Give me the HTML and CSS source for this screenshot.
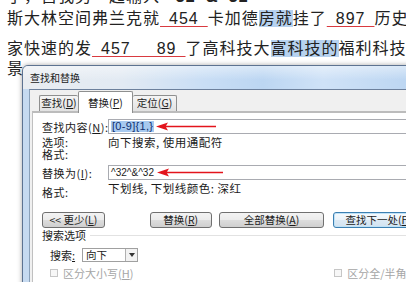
FILE: index.html
```html
<!DOCTYPE html>
<html lang="zh-CN">
<head>
    <meta charset="UTF-8">
    <title>查找和替换</title>
    <link rel="stylesheet" href="styles.css">
</head>
<body>
    <div class="screen">
        <div class="doc">
            <p class="line line-cut">了，自我另一起输入 <b>^32^&amp;^32</b></p>
            <p class="line">斯大林空间弗兰克就<span class="num">&ensp;454&ensp;</span>卡加德<span class="hl">房就</span>挂了<span class="num">&ensp;897&ensp;</span>历史:</p>
            <p class="line">家快速的发<span class="num">&ensp;457&emsp;&ensp;89&ensp;</span>了高科技大<span class="hl">富科技的</span>福利科技发展</p>
            <p class="line line-last">景</p>
        </div>

        <div class="dialog">
            <div class="titlebar">查找和替换</div>
            <div class="client">
                <div class="tabs">
                    <div class="tab tab-find">查找(<u>D</u>)</div>
                    <div class="tab tab-replace active">替换(<u>P</u>)</div>
                    <div class="tab tab-goto">定位(<u>G</u>)</div>
                </div>
                <div class="panel">
                    <div class="row field">
                        <span class="label">查找内容(<u>N</u>):</span>
                        <div class="input">
                            <span class="sel">[0-9]{1,}</span>
                            <svg class="arrow" width="60" height="9" viewBox="0 0 60 9"><path d="M0 4.5 L12 0.5 L10 3.7 L60 3.8 L60 5.2 L10 5.3 L12 8.5 Z" fill="#e3141c"/></svg>
                        </div>
                    </div>
                    <div class="row text-row">
                        <span class="label">选项:</span>
                        <span class="value">向下搜索, 使用通配符</span>
                    </div>
                    <div class="row text-row">
                        <span class="label">格式:</span>
                    </div>
                    <div class="row field field-replace">
                        <span class="label">替换为(<u>I</u>):</span>
                        <div class="input">
                            <span class="plain">^32^&amp;^32</span>
                            <svg class="arrow arrow-long" width="66" height="9" viewBox="0 0 66 9"><path d="M0 4.5 L12 0.5 L10 3.7 L66 3.8 L66 5.2 L10 5.3 L12 8.5 Z" fill="#e3141c"/></svg>
                        </div>
                    </div>
                    <div class="row fmt-row">
                        <span class="label">格式:</span>
                        <span class="value">下划线, 下划线颜色: 深红</span>
                    </div>

                    <div class="buttons">
                        <div class="btn btn-less">&lt;&lt; 更少(<u>L</u>)</div>
                        <div class="btn btn-replace">替换(<u>R</u>)</div>
                        <div class="btn btn-all">全部替换(<u>A</u>)</div>
                        <div class="btn btn-next default">查找下一处(<u>F</u>)</div>
                    </div>

                    <div class="group">搜索选项</div>

                    <div class="row search-row">
                        <span class="search-label">搜索<u>:</u></span>
                        <div class="select">
                            <span class="select-text">向下</span>
                            <span class="drop"></span>
                        </div>
                    </div>

                    <div class="row checks">
                        <div class="check check-case"><span class="box"></span>区分大小写(<u>H</u>)</div>
                        <div class="check"><span class="box"></span>区分全/半角(<u>M</u>)</div>
                    </div>
                </div>
            </div>
        </div>
    </div>
</body>
</html>
```

FILE: styles.css
```css
body {
    margin: 0;
    background: #fff;
}

.screen {
    position: relative;
    width: 406px;
    height: 282px;
    overflow: hidden;
    background: #fff;
}

/* document text behind the dialog */
.doc {
    padding-left: 7px;
    font-family: "Liberation Sans", "Noto Sans CJK SC", sans-serif;
    font-size: 16px;
    letter-spacing: 1px;
    color: #222;
    white-space: nowrap;
}

.line {
    margin: 0;
    height: 30px;
    line-height: 30px;
}

.line-cut {
    height: 14px;
    line-height: 14px;
    margin-top: -10px;
}

.line-last {
    margin-top: -10px;
}

.num {
    text-decoration: underline;
    text-decoration-color: #d93a40;
    text-underline-offset: 2px;
}

.hl {
    background: #b7d2ef;
}

/* dialog window */
.dialog {
    position: absolute;
    left: 22px;
    top: 65px;
    width: 400px;
    height: 240px;
    border: 1px solid #5d7391;
    border-radius: 6px 6px 0 0;
    background: #c6daf0;
    box-shadow: 0 0 5px rgba(0, 0, 0, 0.35);
    font-family: "Noto Sans CJK SC", "Liberation Sans", sans-serif;
    font-size: 11px;
    color: #1b1b1b;
    white-space: nowrap;
}

.titlebar {
    height: 23px;
    line-height: 23px;
    padding-left: 7px;
    font-size: 10px;
    color: #1a1a1a;
    border-radius: 5px 5px 0 0;
    background:
        linear-gradient(180deg, rgba(255, 255, 255, 0.45), rgba(255, 255, 255, 0) 60%),
        linear-gradient(90deg, #e9edf1 0, #e2eaf3 25%, #c9def5 45%, #bcd6f2 60%, #cfe2f7 75%, #b9d4f1 100%);
}

.client {
    margin-left: 6px;
    height: 220px;
    border-left: 1px solid #8aa0b8;
    border-top: 1px solid #6c809c;
    background: #f0f0f0;
}

.tabs {
    display: flex;
    align-items: flex-end;
    height: 21px;
    padding-left: 9px;
}

.tab {
    box-sizing: border-box;
    height: 16px;
    line-height: 14px;
    text-align: center;
    font-size: 10.5px;
    border: 1px solid #8e8f8f;
    border-bottom: none;
    border-radius: 2px 2px 0 0;
    background: linear-gradient(#f5f5f5, #e2e2e2);
}

.tab-find {
    width: 39px;
    border-right: none;
}

.tab-replace {
    width: 55px;
}

.tab-goto {
    width: 44px;
    border-left: none;
}

.tab.active {
    position: relative;
    z-index: 1;
    height: 22px;
    margin-bottom: -2px;
    padding-top: 4px;
    background: #fff;
}

.panel {
    position: relative;
    height: 200px;
    margin-left: 2px;
    padding: 6px 0 0 9px;
    border-left: 1px solid #c0c0c0;
    border-top: 2px solid #bcbcbc;
    background: #fff;
}

.row {
    display: flex;
    align-items: center;
}

.label {
    flex: none;
    width: 66px;
    letter-spacing: 0.5px;
}

.value {
    font-size: 11.5px;
    letter-spacing: 0.5px;
}

.field {
    height: 15px;
}

.text-row {
    line-height: 12px;
}

.text-row:nth-child(2) {
    margin-top: 2px;
}

.field-replace {
    margin-top: 5px;
}

.input {
    box-sizing: border-box;
    display: flex;
    align-items: center;
    width: 320px;
    height: 15px;
    padding-left: 2px;
    border: 1px solid #a9abb1;
    background: #fff;
}

.sel {
    font-family: "Liberation Sans", sans-serif;
    font-size: 11px;
    line-height: 11px;
    letter-spacing: 0.3px;
    padding: 0 1px;
    color: #10306e;
    background: #a7c9ef;
}

.plain {
    font-family: "Liberation Sans", sans-serif;
    font-size: 10px;
    color: #222;
}

.arrow {
    flex: none;
    margin-left: 2px;
}

.arrow-long {
    margin-left: 3px;
}

.fmt-row {
    align-items: flex-start;
    margin-top: 2px;
    height: 16px;
    line-height: 12px;
}

.fmt-row .label {
    margin-top: 4px;
}

/* buttons */
.buttons {
    display: flex;
    margin-top: 14px;
}

.btn {
    box-sizing: border-box;
    height: 16px;
    line-height: 14px;
    text-align: center;
    font-size: 10.5px;
    border: 1px solid #707070;
    border-radius: 3px;
    background: linear-gradient(#f3f3f3 0, #ebebeb 50%, #dddddd 51%, #cfcfcf 100%);
}

.btn-less {
    width: 63px;
}

.btn-replace {
    width: 62px;
    margin-left: 45px;
}

.btn-all {
    width: 106px;
    margin-left: 7px;
}

.btn-next {
    width: 90px;
    margin-left: 9px;
}

.btn.default {
    border-color: #3c7fb1;
    box-shadow: inset 0 0 0 1px #bfe2f7;
    background: linear-gradient(#f6fafd 0, #eaf3fa 50%, #dce9f4 51%, #d2e3f1 100%);
}

/* search options */
.group {
    display: flex;
    align-items: center;
    margin-top: 1px;
    line-height: 12px;
}

.group::after {
    content: "";
    flex: 1;
    height: 1px;
    margin-left: 4px;
    background: #e2e2e2;
}

.search-row {
    margin-top: 6px;
    padding-left: 8px;
}

.search-label {
    width: 32px;
}

.select {
    box-sizing: border-box;
    display: flex;
    align-items: center;
    justify-content: space-between;
    width: 56px;
    height: 14px;
    border: 1px solid #a0a0a0;
    background: #fff;
}

.select-text {
    padding-left: 3px;
    font-size: 10.5px;
    line-height: 12px;
}

.drop {
    box-sizing: border-box;
    display: flex;
    align-items: center;
    justify-content: center;
    width: 12px;
    height: 12px;
    border-left: 1px solid #b0b0b0;
    background: #f2f2f2;
}

.drop::after {
    content: "";
    border-top: 4px solid #333;
    border-left: 3.5px solid transparent;
    border-right: 3.5px solid transparent;
}

.checks {
    margin-top: 4px;
    padding-left: 8px;
    line-height: 12px;
    color: #a6a6a6;
}

.check {
    display: flex;
    align-items: center;
}

.check-case {
    width: 335px;
}

.box {
    box-sizing: border-box;
    width: 8px;
    height: 8px;
    margin-right: 5px;
    border: 1px solid #c6c6c6;
    background: #f7f7f7;
}
```
